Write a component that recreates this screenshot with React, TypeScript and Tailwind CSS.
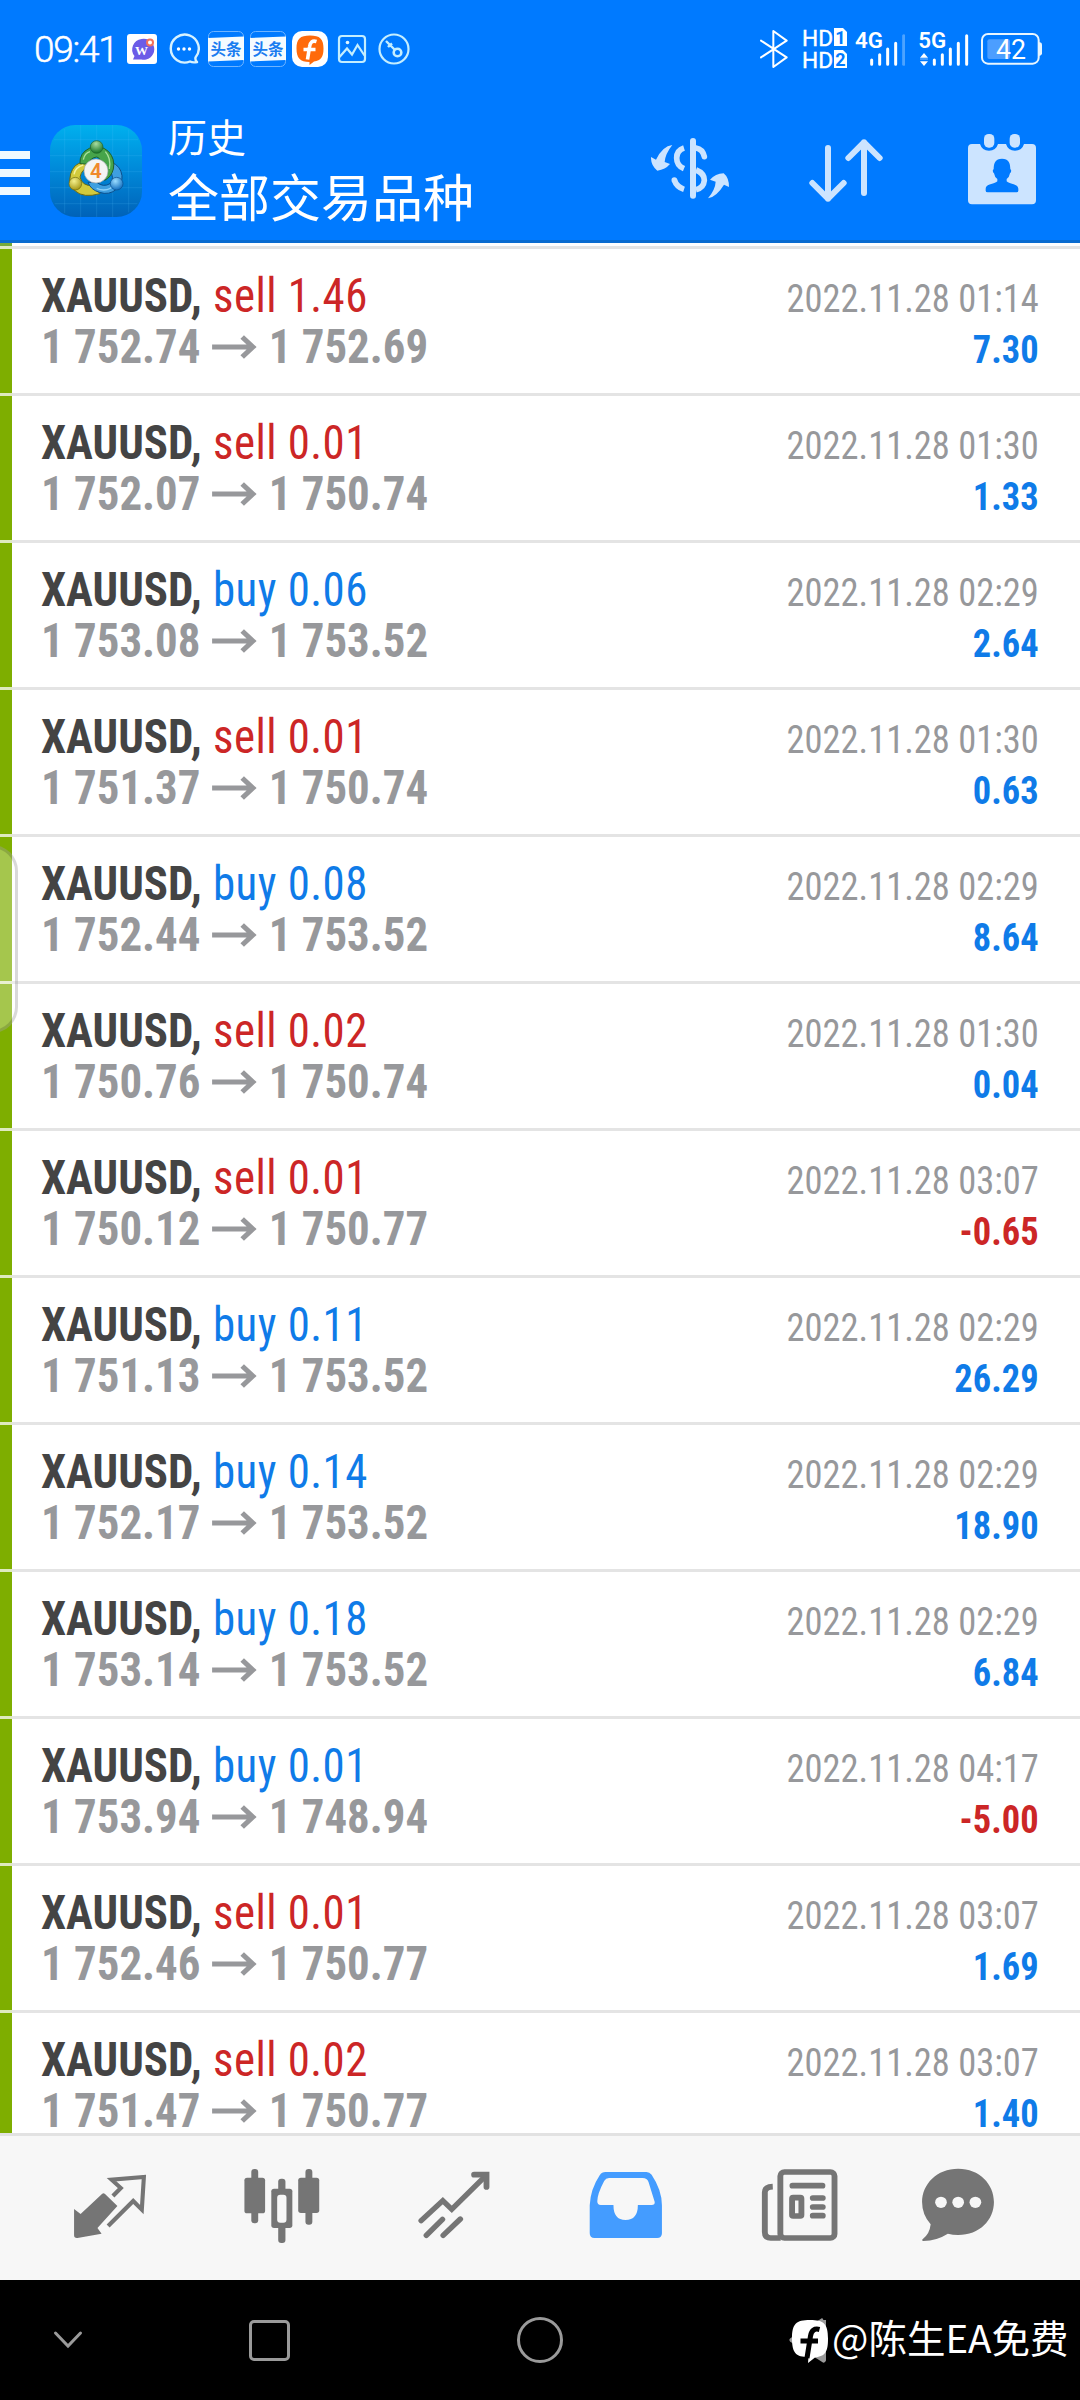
import React from 'react';

type Deal = {
  side: 'buy' | 'sell';
  volume: string;
  open: string;
  close: string;
  time: string;
  profit: string;
};

const deals: Deal[] = [
  { side: 'sell', volume: '1.46', open: '1 752.74', close: '1 752.69', time: '2022.11.28 01:14', profit: '7.30' },
  { side: 'sell', volume: '0.01', open: '1 752.07', close: '1 750.74', time: '2022.11.28 01:30', profit: '1.33' },
  { side: 'buy', volume: '0.06', open: '1 753.08', close: '1 753.52', time: '2022.11.28 02:29', profit: '2.64' },
  { side: 'sell', volume: '0.01', open: '1 751.37', close: '1 750.74', time: '2022.11.28 01:30', profit: '0.63' },
  { side: 'buy', volume: '0.08', open: '1 752.44', close: '1 753.52', time: '2022.11.28 02:29', profit: '8.64' },
  { side: 'sell', volume: '0.02', open: '1 750.76', close: '1 750.74', time: '2022.11.28 01:30', profit: '0.04' },
  { side: 'sell', volume: '0.01', open: '1 750.12', close: '1 750.77', time: '2022.11.28 03:07', profit: '-0.65' },
  { side: 'buy', volume: '0.11', open: '1 751.13', close: '1 753.52', time: '2022.11.28 02:29', profit: '26.29' },
  { side: 'buy', volume: '0.14', open: '1 752.17', close: '1 753.52', time: '2022.11.28 02:29', profit: '18.90' },
  { side: 'buy', volume: '0.18', open: '1 753.14', close: '1 753.52', time: '2022.11.28 02:29', profit: '6.84' },
  { side: 'buy', volume: '0.01', open: '1 753.94', close: '1 748.94', time: '2022.11.28 04:17', profit: '-5.00' },
  { side: 'sell', volume: '0.01', open: '1 752.46', close: '1 750.77', time: '2022.11.28 03:07', profit: '1.69' },
  { side: 'sell', volume: '0.02', open: '1 751.47', close: '1 750.77', time: '2022.11.28 03:07', profit: '1.40' },
];

function ToutiaoIcon() {
  return (
    <svg className="ml-[6px] h-[36px] w-[36px]" viewBox="0 0 36 36">
      <rect x="0.5" y="0.5" width="35" height="35" rx="5" fill="none" stroke="#6fb4ff" />
      <path d="M0 7 L36 5.5 V29 L0 30.5 Z" fill="#f4fbff" />
      <text
        x="18"
        y="23.5"
        textAnchor="middle"
        fontSize="15.5"
        fontWeight="700"
        fill="#1a7df0"
        fontFamily="'Noto Sans CJK SC', sans-serif"
      >
        头条
      </text>
    </svg>
  );
}

function StatusBar() {
  return (
    <div className="flex h-[98px] items-center pl-[34px] pr-[38px] text-white">
      <span className="w-[93px] font-[Roboto] text-[37px] leading-[37px] font-light tracking-[-1.3px] [-webkit-text-stroke:0.5px_white]">
        09:41
      </span>
      <svg className="h-[30px] w-[30px]" viewBox="0 0 30 30">
        <rect width="30" height="30" rx="3" fill="#fff" />
        <path d="M14.500 5a10.500 10.500 0 1 1 0 20.500H6l1.500-3.500A10.500 10.500 0 0 1 14.500 5Z" fill="#6c5ce7" />
        <circle cx="23" cy="8.500" r="3" fill="#fff" stroke="#f2705c" strokeWidth="2" />
        <text x="14.5" y="20.5" textAnchor="middle" fontSize="13" fontWeight="700" fill="#fff" fontFamily="'Liberation Serif', serif">
          W
        </text>
      </svg>
      <svg className="ml-[11px] h-[32px] w-[32px]" viewBox="0 0 32 32" fill="none" stroke="#d6f2ff" strokeWidth="2.4">
        <path d="M27.500 24.500A14 14 0 1 0 22 28.500Q25 30 29 29Q27 27.500 27.500 24.500Z" strokeLinejoin="round" />
        <g fill="#fff" stroke="none">
          <circle cx="10.500" cy="16" r="1.700" />
          <circle cx="16" cy="16" r="1.700" />
          <circle cx="21.500" cy="16" r="1.700" />
        </g>
      </svg>
      <div className="ml-[2px] flex">
        <ToutiaoIcon />
        <ToutiaoIcon />
      </div>
      <svg className="ml-[6px] h-[36px] w-[36px]" viewBox="0 0 36 36">
        <rect width="36" height="36" rx="10" fill="#fff" />
        <path
          d="M18 4.500C28 4.500 31.500 8 31.500 17.500C31.500 26 29 29.500 22 30.500L17.500 34L17.500 31C8 31 4.500 27 4.500 17.500C4.500 8 8 4.500 18 4.500Z"
          fill="#ff6a0a"
        />
        <path d="M24.500 10.500Q18.500 8.500 17.500 16L15.500 28.500M11.500 18.500H23.500" fill="none" stroke="#fff" strokeWidth="3.600" />
      </svg>
      <svg className="ml-[9px] h-[30px] w-[30px]" viewBox="0 0 30 30" fill="none" stroke="#c4eeff" strokeWidth="2.2">
        <rect x="2" y="2" width="26" height="26" rx="3" />
        <path d="M2.500 23L10 14.500L15 20.500L20.500 11L27.500 21.500" />
        <circle cx="10.500" cy="8.500" r="1.800" fill="#dff5ff" stroke="none" />
      </svg>
      <svg className="ml-[11px] h-[32px] w-[32px]" viewBox="0 0 32 32" fill="none" stroke="#c4eeff" strokeWidth="2.2">
        <circle cx="16" cy="16" r="14.500" />
        <circle cx="19.500" cy="19.500" r="3.800" strokeWidth="2.600" />
        <path d="M17 17L8 8M14 10.500L10.500 13.500M10 14L12 12" strokeWidth="2.400" />
      </svg>

      <svg
        className="ml-auto h-[38px] w-[28px]"
        viewBox="478 90 84 114"
        fill="none"
        stroke="#fff"
        strokeWidth="6"
        strokeLinejoin="round"
        strokeLinecap="round"
      >
        <path d="M481 122L558 172L518 201V93L558 122L481 172" />
      </svg>
      <svg className="ml-[15px] h-[42px] w-[44px]" viewBox="0 0 44 42" fontFamily="Roboto, sans-serif">
        <text x="-1" y="17.500" fontSize="22" fill="#fff" stroke="#fff" strokeWidth="0.4" textLength="31" lengthAdjust="spacingAndGlyphs">
          HD
        </text>
        <text x="-1" y="40" fontSize="22" fill="#fff" stroke="#fff" strokeWidth="0.4" textLength="31" lengthAdjust="spacingAndGlyphs">
          HD
        </text>
        <path d="M31 0h9l4 4v14h-13zM31 22h9l4 4v14h-13z" fill="#fff" />
        <text x="37.500" y="15.500" fontSize="18" fontWeight="700" fill="#007aff" textAnchor="middle">1</text>
        <text x="37.500" y="37.500" fontSize="18" fontWeight="700" fill="#007aff" textAnchor="middle">2</text>
      </svg>
      <svg className="ml-[8px] h-[34px] w-[50px]" viewBox="765 93 150 102" fontFamily="Roboto, sans-serif">
        <text x="765" y="142" fontSize="64" fontWeight="600" fill="#fff" textLength="84" lengthAdjust="spacingAndGlyphs">4G</text>
        <g stroke="#fff" strokeWidth="9" strokeLinecap="round">
          <path d="M815 177V190M839 161V190M863 144V190M887 127V190" />
          <path d="M911 104V190" stroke="#4da3ff" />
        </g>
      </svg>
      <svg className="ml-[14px] h-[34px] w-[50px]" viewBox="957 93 150 102" fontFamily="Roboto, sans-serif">
        <text x="955" y="142" fontSize="64" fontWeight="600" fill="#fff" textLength="84" lengthAdjust="spacingAndGlyphs">5G</text>
        <path d="M960 170L972 156L984 170ZM960 181L972 195L984 181ZM960 173H984V175H960Z" fill="#fff" />
        <path d="M1003 177V190M1027 161V190M1051 144V190M1075 127V190M1100 104V190" stroke="#fff" strokeWidth="9" strokeLinecap="round" />
      </svg>
      <svg className="ml-[12px] h-[32px] w-[61px]" viewBox="1143 99 183 96" fontFamily="Roboto, sans-serif">
        <rect x="1146" y="102" width="170" height="89" rx="18" fill="none" stroke="#e8f6ff" strokeWidth="6" />
        <rect x="1162" y="118" width="68" height="59" rx="6" fill="#4c9eff" />
        <path d="M1316 127H1320Q1326 128 1326 134V160Q1326 166 1320 167H1316Z" fill="#e8f6ff" />
        <text x="1233" y="177" fontSize="81" fill="#fff" textAnchor="middle" textLength="90" lengthAdjust="spacingAndGlyphs">42</text>
      </svg>
    </div>
  );
}

function AppLogo() {
  return (
    <svg className="ml-[20px] mt-[27px] h-[92px] w-[92px]" viewBox="0 0 276 276">
      <defs>
        <linearGradient id="logoBg" x1="0" y1="0" x2="0" y2="1">
          <stop offset="0" stopColor="#00b0ee" />
          <stop offset="0.5" stopColor="#0088d8" />
          <stop offset="1" stopColor="#0062b8" />
        </linearGradient>
        <radialGradient id="ballGreen" cx="0.45" cy="0.25" r="0.7">
          <stop offset="0" stopColor="#a8dca0" />
          <stop offset="1" stopColor="#1d7a2c" />
        </radialGradient>
        <radialGradient id="ballYellow" cx="0.4" cy="0.3" r="0.7">
          <stop offset="0" stopColor="#f4f08c" />
          <stop offset="1" stopColor="#a89a18" />
        </radialGradient>
        <radialGradient id="ballBlue" cx="0.4" cy="0.3" r="0.7">
          <stop offset="0" stopColor="#9adcff" />
          <stop offset="1" stopColor="#1470c0" />
        </radialGradient>
      </defs>
      <rect width="276" height="276" rx="76" fill="url(#logoBg)" />
      <path
        d="M44 12V264M92 0V276M140 0V276M188 0V276M236 14V262M12 44H264M0 92H276M0 140H276M0 188H276M14 236H262"
        stroke="#5cc8ff"
        strokeOpacity="0.25"
        strokeWidth="2"
      />
      {/* three crescents around the badge */}
      <path
        d="M60 180Q56 142 76 122Q96 106 124 112L112 130Q96 132 90 156Q96 184 130 182L150 206Q100 220 76 198Z"
        fill="#d2ca3c"
        stroke="#6e6a10"
        strokeWidth="3"
      />
      <path
        d="M184 112Q212 122 216 152Q218 172 200 192Q178 212 148 202Q122 194 114 172L140 172Q160 188 180 176Q196 160 178 134Z"
        fill="#3f9fe0"
        stroke="#0c4f8c"
        strokeWidth="3"
      />
      <path
        d="M90 116Q88 84 118 70Q150 56 176 80Q196 102 190 132Q184 156 164 166L158 130Q152 96 140 96Q120 98 116 118Z"
        fill="#46a44a"
        stroke="#20602a"
        strokeWidth="3"
      />
      <path d="M100 104Q104 84 120 80M166 80Q184 100 178 132" fill="none" stroke="#a8e09c" strokeWidth="4" />
      <path d="M72 148Q76 126 100 120" fill="none" stroke="#f6f29a" strokeWidth="4" />
      <path d="M140 190Q174 206 200 172" fill="none" stroke="#8ed2fa" strokeWidth="4" />
      <circle cx="140" cy="66" r="19" fill="url(#ballGreen)" stroke="#20602a" strokeWidth="2" />
      <circle cx="76" cy="176" r="19" fill="url(#ballYellow)" stroke="#6e6a10" strokeWidth="2" />
      <circle cx="200" cy="176" r="19" fill="url(#ballBlue)" stroke="#0c4f8c" strokeWidth="2" />
      <circle cx="138" cy="138" r="36" fill="#f4f4f4" stroke="#9aa4a8" strokeWidth="2" />
      <text x="138" y="160" textAnchor="middle" fontSize="62" fontWeight="600" fill="#f08a2c" fontFamily="Roboto, sans-serif">
        4
      </text>
    </svg>
  );
}

function Toolbar() {
  return (
    <div className="flex h-[142px] items-start pr-[44px]">
      <div className="mt-[53px] flex w-[30px] flex-col gap-[10px]">
        <span className="h-[8px] bg-[#f0f9ff]" />
        <span className="h-[8px] bg-[#f0f9ff]" />
        <span className="h-[8px] bg-[#f0f9ff]" />
      </div>
      <AppLogo />
      <div className="ml-[26px] mt-[8px] font-['Noto_Sans_CJK_SC'] font-normal text-white">
        <div className="text-[39px] leading-[58px]">历史</div>
        <div className="text-[51px] leading-[63px]">全部交易品种</div>
      </div>
      <svg className="ml-auto mt-[40px] h-[61px] w-[78px]" viewBox="153 416 234 183" fill="#cce4ff">
        <g fill="none" stroke="#cce4ff" strokeWidth="17">
          <path d="M279 425V589" strokeWidth="18" strokeLinecap="round" />
          <path d="M252 446Q230 453 230 476Q230 499 252 508" />
          <path d="M223 542Q230 563 252 570" />
          <path d="M288 446Q308 449 313 472" strokeLinecap="round" />
          <path d="M288 512Q313 522 313 543Q311 566 288 571" />
        </g>
        <circle cx="223" cy="542" r="8.500" />
        <path d="M217 437Q188 440 168 481L153 473Q152 499 172 514Q196 511 210 494L194 488Q196 463 217 437Z" />
        <path d="M324 597Q350 592 372 556L387 563Q387 535 371 522Q346 523 330 541L347 547Q346 570 324 597Z" />
      </svg>
      <svg
        className="ml-[80px] mt-[41px] h-[63px] w-[74px]"
        viewBox="627 417 222 189"
        fill="none"
        stroke="#cce4ff"
        strokeWidth="18"
        strokeLinecap="round"
        strokeLinejoin="round"
      >
        <path d="M684 444V596M637 549L684 596L731 549" />
        <path d="M792 579V427M745 474L792 427L839 474" />
      </svg>
      <svg className="ml-[85px] mt-[36px] h-[71px] w-[68px]" viewBox="1104 404 204 213" fill="#cce4ff">
        <path d="M1116 434H1140Q1146 454 1167 454Q1188 454 1194 434H1218Q1224 454 1245 454Q1266 454 1272 434H1296Q1308 434 1308 446V603Q1308 615 1296 615H1116Q1104 615 1104 603V446Q1104 434 1116 434Z" />
        <rect x="1152" y="404" width="31" height="41" rx="14" />
        <rect x="1229" y="404" width="31" height="41" rx="14" />
        <path
          d="M1206 478C1226 478 1231 491 1231 510C1235 511 1234 519 1230 522Q1228 534 1220 539V546Q1224 551 1241 555Q1255 559 1255 568V574Q1255 579 1249 579H1163Q1157 579 1157 574V568Q1157 559 1171 555Q1188 551 1192 546V539Q1184 534 1182 522C1178 519 1177 511 1181 510C1181 491 1186 478 1206 478Z"
          fill="#007aff"
        />
      </svg>
    </div>
  );
}

function DealRow({ deal }: { deal: Deal }) {
  const sideColor = deal.side === 'buy' ? 'text-[#0f7be8]' : 'text-[#cc2626]';
  const profitColor = deal.profit.startsWith('-') ? 'text-[#cc2626]' : 'text-[#0f7be8]';
  return (
    <li className="h-[147px] shrink-0">
      <div className="flex h-[3px]">
        <span className="w-[12px] bg-[#dfeabf]" />
        <span className="flex-1 bg-[#e4e4e4]" />
      </div>
      <div className="flex h-[144px] justify-between border-l-[12px] border-[#7eae00] pl-[29px] pr-[41px]">
        <div className="origin-left scale-x-[0.935] pt-[21px] text-[48px] leading-[51px] whitespace-nowrap">
          <div>
            <span className="font-bold text-[#444444]">XAUUSD, </span>
            <span className={`ml-[1px] tracking-[0.5px] ${sideColor}`}>
              {deal.side} {deal.volume}
            </span>
          </div>
          <div className="flex items-center font-bold text-[#97989b]">
            <span>{deal.open}</span>
            <svg className="ml-[12px] mr-[13px] h-[24px] w-[48px]" viewBox="0 0 44 24" preserveAspectRatio="none">
              <path d="M0 12H40M29.500 2L40 12L29.500 22" fill="none" stroke="currentColor" strokeWidth="5" />
            </svg>
            <span>{deal.close}</span>
          </div>
        </div>
        <div className="origin-right scale-x-[0.935] pt-[25px] text-right text-[39px] leading-[51px] whitespace-nowrap">
          <div className="text-[#97989b]">{deal.time}</div>
          <div className={`font-bold ${profitColor}`}>{deal.profit}</div>
        </div>
      </div>
    </li>
  );
}

function BottomNav() {
  return (
    <nav className="flex h-[144px] shrink-0 items-start bg-[#f7f7f7] pl-[72px] pt-[31px] text-[#757575]">
      <svg className="h-[78px] w-[76px]" viewBox="209 321 221 234" preserveAspectRatio="none">
        <path d="M215 447L234 462L297 401Q301 398 305 402L341 438L283 504L295 521L225 534Q215 535 215 526Z" fill="currentColor" />
        <path
          d="M328 408L351 384L324 359L418 351L412 449L387 423L314 498"
          fill="none"
          stroke="currentColor"
          strokeWidth="12"
        />
      </svg>
      <svg className="ml-[94px] h-[78px] w-[80px]" viewBox="702 321 232 234" preserveAspectRatio="none" fill="currentColor">
        <rect x="729" y="327" width="20" height="163" rx="9" />
        <rect x="709" y="353" width="60" height="107" rx="8" />
        <rect x="886" y="327" width="20" height="167" rx="9" />
        <rect x="865" y="353" width="61" height="106" rx="8" />
        <rect x="807" y="356" width="21" height="193" rx="9" />
        <rect x="787" y="386" width="61" height="118" rx="8" />
        <rect x="804" y="404" width="27" height="84" rx="9" fill="#f7f7f7" />
      </svg>
      <svg
        className="ml-[94px] h-[78px] w-[76px]"
        viewBox="1207 321 221 234"
        preserveAspectRatio="none"
        fill="none"
        stroke="currentColor"
        strokeWidth="16"
        strokeLinecap="round"
      >
        <path d="M1222 482L1285 422L1311 448L1405 352" strokeLinejoin="miter" />
        <path d="M1376 344H1412V381" strokeWidth="17" />
        <path d="M1237 526L1284 478M1286 526L1336 477" />
      </svg>
      <svg className="ml-[96px] h-[78px] w-[76px]" viewBox="141 321 221 234" preserveAspectRatio="none">
        <path
          fillRule="evenodd"
          fill="#449cff"
          d="M192 336H311Q320 336 326 344Q356 390 356 436V520Q356 534 342 534H160Q146 534 146 520V436Q148 388 175 346Q181 336 192 336ZM202 354Q193 354 188 363Q168 402 168 424Q168 435 178 435H215Q215 480 250 480Q286 480 286 435H326Q336 435 335 426L317 366Q313 354 300 354Z"
        />
      </svg>
      <svg className="ml-[96px] h-[78px] w-[79px]" viewBox="640 321 229 234" preserveAspectRatio="none" fill="none" stroke="currentColor" strokeWidth="17">
        <rect x="699" y="336" width="157" height="198" rx="12" />
        <path d="M677 380Q654 381 654 397V516Q654 534 671 534H700" />
        <path d="M734 377H821M793 414H822M793 441H822M793 467H822" strokeLinecap="round" />
        <rect x="733" y="413" width="27" height="55" rx="3" />
      </svg>
      <svg className="ml-[81px] h-[78px] w-[76px]" viewBox="1103 321 221 234" preserveAspectRatio="none" fill="currentColor">
        <path d="M1214 326C1276 326 1318 372 1318 426C1318 480 1276 525 1214 525Q1198 525 1184 521Q1152 542 1113 543Q1106 541 1112 536Q1131 522 1134 493Q1109 464 1109 426C1109 372 1152 326 1214 326Z" />
        <g fill="#f7f7f7">
          <circle cx="1164" cy="427" r="17" />
          <circle cx="1214" cy="427" r="17" />
          <circle cx="1264" cy="427" r="17" />
        </g>
      </svg>
    </nav>
  );
}

function SystemNav() {
  return (
    <div className="flex h-[120px] shrink-0 items-start bg-black pl-[53px] pt-[37px]">
      <svg className="mt-[13px] h-[20px] w-[30px]" viewBox="0 0 30 20" fill="none" stroke="#9a9a9a" strokeWidth="3">
        <path d="M2.500 3L15 16L27.500 3" strokeLinecap="round" />
      </svg>
      <div className="ml-[166px] mt-[3px] h-[41px] w-[41px] rounded-[5px] border-[3px] border-[#9a9a9a]" />
      <div className="ml-[227px] h-[46px] w-[46px] rounded-full border-[3px] border-[#9a9a9a]" />
      <svg className="ml-[226px] h-[46px] w-[40px]" viewBox="0 0 40 46">
        <path d="M34.500 3L3 23L34.500 43V3" fill="none" stroke="#9a9a9a" strokeWidth="5" strokeLinejoin="round" />
        <path
          fillRule="evenodd"
          d="M21 3C35 3 39 7 39 21.500C39 35 36.500 39 26 40.500L19 46L19.500 40C7 40 3 36 3 21.500C3 7 7 3 21 3Z"
          fill="#fff"
        />
        <path d="M30.500 12.500Q23 10.500 21.500 19L18 41M11.500 24H29" fill="none" stroke="#000" strokeWidth="5" />
      </svg>
      <span className="ml-[3px] mt-[-8px] font-['Noto_Sans_CJK_SC'] text-[38.5px] leading-[54px] font-normal whitespace-nowrap text-white">
        @陈生EA免费
      </span>
    </div>
  );
}

export default function App() {
  return (
    <div className="relative flex h-[2400px] w-[1080px] flex-col overflow-hidden bg-white font-['Roboto_Condensed']">
      <header className="h-[243px] shrink-0 border-b-[3px] border-[#0a6cd0] bg-[#007aff]">
        <StatusBar />
        <Toolbar />
      </header>
      <ul className="flex h-[1890px] shrink-0 flex-col overflow-hidden">
        <li className="h-[3px] shrink-0 border-l-[12px] border-[#76aa38]" />
        {deals.map((deal, index) => (
          <DealRow key={index} deal={deal} />
        ))}
      </ul>
      <div className="h-[3px] shrink-0 bg-[#e2e2e2]" />
      <BottomNav />
      <SystemNav />
      {/* edge panel handle */}
      <div className="absolute left-[-38px] top-[845px] h-[188px] w-[56px] rounded-[26px] border-[3px] border-black/15 bg-white/30" />
    </div>
  );
}
